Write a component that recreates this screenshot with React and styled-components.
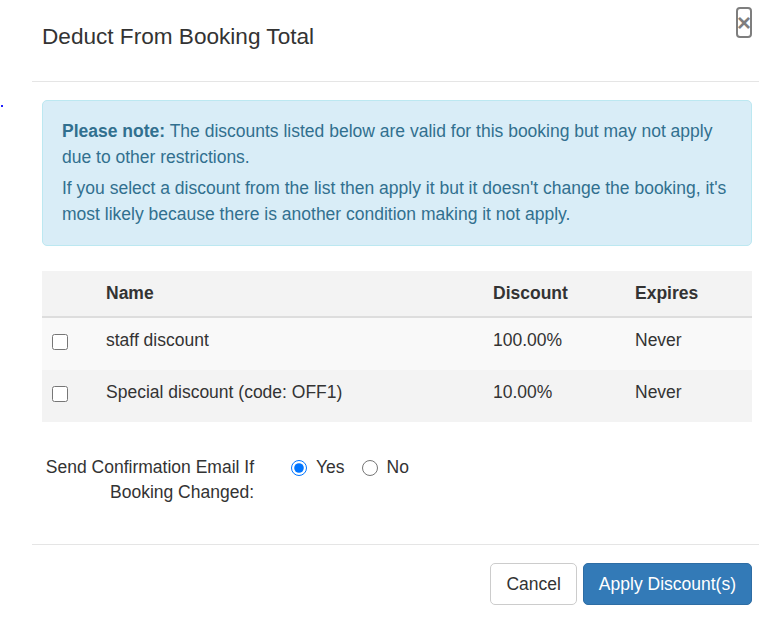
import styled, { createGlobalStyle } from "styled-components";

const GlobalStyle = createGlobalStyle`
  html, body {
    margin: 0;
    padding: 0;
    background: #fff;
    overflow: hidden;
  }
  body {
    font-family: "Liberation Sans", Arial, sans-serif;
    font-size: 17.5px;
    line-height: 25px;
    color: #333;
  }
  * {
    box-sizing: border-box;
  }
`;

const StPage = styled.div`
  display: flex;
  width: 762px;
  min-height: 622px;
`;

const StGutter = styled.div`
  width: 32px;
  flex-shrink: 0;
`;

const StDot = styled.span`
  display: block;
  width: 2px;
  height: 2px;
  margin: 105px 0 0 1px;
  background: #2020ff;
`;

const StModal = styled.div`
  width: 730px;
  flex-shrink: 0;
  background: #fff;
`;

const StHeader = styled.div`
  display: flex;
  justify-content: space-between;
  align-items: flex-start;
  padding: 7px 10px 0;
  height: 82px;
  border-bottom: 1px solid #e5e5e5;
`;

const StTitle = styled.h4`
  margin: 17px 0 0;
  font-size: 22.6px;
  font-weight: 400;
  line-height: 25px;
  color: #333;
`;

const StClose = styled.button`
  width: 16px;
  height: 31px;
  padding: 0;
  display: flex;
  align-items: center;
  justify-content: center;
  background: transparent;
  border: 2px solid #000;
  border-radius: 4px;
  color: #000;
  opacity: 0.5;
  font-family: "Liberation Sans", Arial, sans-serif;
  font-size: 24px;
  font-weight: 700;
  line-height: 1;
  cursor: pointer;
`;

const StBody = styled.div`
  padding: 18px 10px 0;
`;

const StAlert = styled.div`
  padding: 17px 19px 18px;
  margin-bottom: 25px;
  border: 1px solid #bce8f1;
  border-radius: 5px;
  background: #d9edf7;
  color: #31708f;
  line-height: 26px;

  p {
    margin: 0;
  }
  p + p {
    margin-top: 5px;
  }
  strong {
    font-weight: 700;
  }
`;

const StTable = styled.table`
  width: 100%;
  border-collapse: collapse;
  table-layout: fixed;
  margin-bottom: 25px;
`;

const StHeadCell = styled.th`
  padding: 10px;
  text-align: left;
  font-weight: 700;
  background: #f3f3f3;
  border-bottom: 2px solid #ddd;
  vertical-align: top;
`;

const StRow = styled.tr`
  background: ${(props) => (props.$odd ? "#f9f9f9" : "#f3f3f3")};
  & + & td {
    border-top: 1px solid #ddd;
  }
`;

const StCell = styled.td`
  padding: 10px;
  vertical-align: top;
`;

const StCheck = styled.input`
  display: block;
  width: 16px;
  height: 16px;
  margin: 6px 0 10px;
`;

const StFormRow = styled.div`
  display: flex;
  align-items: flex-start;
  padding-top: 8px;
  padding-bottom: 39px;
`;

const StLabel = styled.label`
  width: 212px;
  flex-shrink: 0;
  text-align: right;
  margin-right: 37px;
`;

const StRadios = styled.div`
  display: flex;
  align-items: center;
  gap: 17px;
`;

const StRadioLabel = styled.label`
  display: flex;
  align-items: center;
  gap: 9px;
`;

const StRadio = styled.input`
  width: 16px;
  height: 16px;
  margin: 0;
`;

const StFooter = styled.div`
  display: flex;
  justify-content: flex-end;
  gap: 6px;
  padding: 18px 10px;
  border-top: 1px solid #e5e5e5;
`;

const StButton = styled.button`
  height: 42px;
  padding: 0 15px;
  font-family: "Liberation Sans", Arial, sans-serif;
  font-size: 17.5px;
  line-height: 25px;
  border-radius: 5px;
  border: 1px solid ${(props) => (props.$primary ? "#2e6da4" : "#ccc")};
  background: ${(props) => (props.$primary ? "#337ab7" : "#fff")};
  color: ${(props) => (props.$primary ? "#fff" : "#333")};
  cursor: pointer;
`;

const discounts = [
  { id: 1, name: "staff discount", amount: "100.00%", expires: "Never" },
  { id: 2, name: "Special discount (code: OFF1)", amount: "10.00%", expires: "Never" },
];

const App = () => {
  return (
    <>
      <GlobalStyle />
      <StPage>
        <StGutter>
          <StDot />
        </StGutter>
        <StModal>
          <StHeader>
            <StTitle>Deduct From Booking Total</StTitle>
            <StClose type="button" aria-label="Close">
              ×
            </StClose>
          </StHeader>
          <StBody>
            <StAlert>
              <p>
                <strong>Please note:</strong> The discounts listed below are valid for this
                booking but may not apply due to other restrictions.
              </p>
              <p>
                If you select a discount from the list then apply it but it doesn't change the
                booking, it's most likely because there is another condition making it not
                apply.
              </p>
            </StAlert>
            <StTable>
              <colgroup>
                <col style={{ width: 54 }} />
                <col style={{ width: 387 }} />
                <col style={{ width: 142 }} />
                <col />
              </colgroup>
              <thead>
                <tr>
                  <StHeadCell />
                  <StHeadCell>Name</StHeadCell>
                  <StHeadCell>Discount</StHeadCell>
                  <StHeadCell>Expires</StHeadCell>
                </tr>
              </thead>
              <tbody>
                {discounts.map((discount, i) => (
                  <StRow key={discount.id} $odd={i % 2 === 0}>
                    <StCell>
                      <StCheck type="checkbox" />
                    </StCell>
                    <StCell>{discount.name}</StCell>
                    <StCell>{discount.amount}</StCell>
                    <StCell>{discount.expires}</StCell>
                  </StRow>
                ))}
              </tbody>
            </StTable>
            <StFormRow>
              <StLabel>Send Confirmation Email If Booking Changed:</StLabel>
              <StRadios>
                <StRadioLabel>
                  <StRadio type="radio" name="sendEmail" defaultChecked />
                  Yes
                </StRadioLabel>
                <StRadioLabel>
                  <StRadio type="radio" name="sendEmail" />
                  No
                </StRadioLabel>
              </StRadios>
            </StFormRow>
          </StBody>
          <StFooter>
            <StButton type="button">Cancel</StButton>
            <StButton type="button" $primary>
              Apply Discount(s)
            </StButton>
          </StFooter>
        </StModal>
      </StPage>
    </>
  );
};

export default App;
